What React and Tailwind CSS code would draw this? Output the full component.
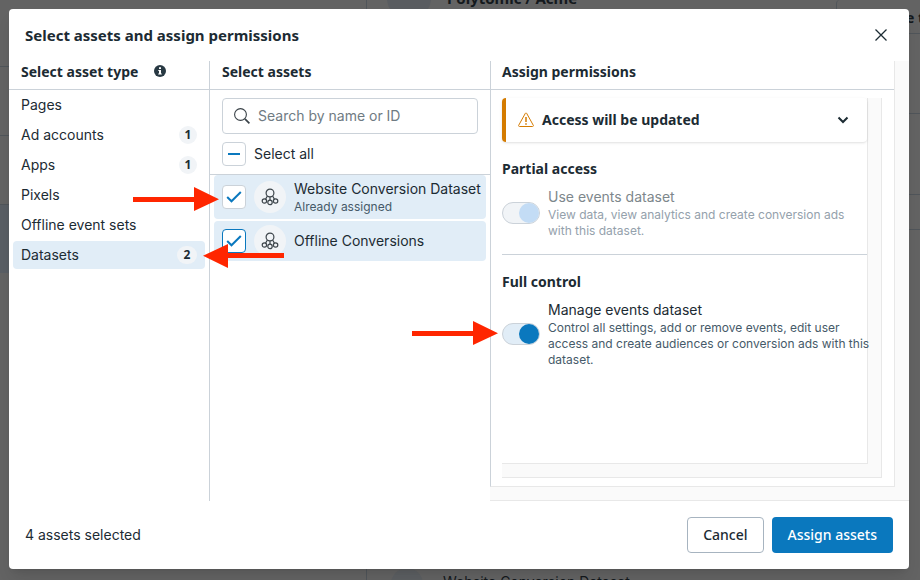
import React from "react";

const assetTypes = [
  { name: "Pages" },
  { name: "Ad accounts", count: 1 },
  { name: "Apps", count: 1 },
  { name: "Pixels" },
  { name: "Offline event sets" },
  { name: "Datasets", count: 2 },
];

const headingClass =
  "font-['Noto_Sans',sans-serif] text-sm leading-[22px] font-bold text-[#1c2b33]";

const columnHeaderClass = "flex h-[29px] shrink-0 border-b border-[#cbd2d9]";

const DatasetIcon = () => (
  <svg
    viewBox="0 0 18 18"
    className="size-[18px]"
    fill="none"
    stroke="#3d454b"
    strokeWidth="1.2"
    aria-hidden="true"
  >
    <circle cx="9" cy="5" r="3.9" />
    <circle cx="3.4" cy="13" r="2.2" />
    <circle cx="9" cy="14.4" r="2.2" />
    <circle cx="14.6" cy="13" r="2.2" />
    <path d="M6.4 8 4.6 11.1M9 8.9v3.3M11.6 8l1.8 3.1" />
  </svg>
);

const Checkbox = ({ id, checked, onChange, mixed = false, focused = false }) => (
  <span className="grid size-6 shrink-0">
    <input
      id={id}
      type="checkbox"
      checked={checked}
      onChange={onChange}
      className={`col-start-1 row-start-1 size-6 appearance-none rounded border bg-white ${
        focused ? "border-[#0a78be]" : "border-[#cbd2d9]"
      }`}
    />
    <svg
      viewBox="0 0 24 24"
      className="pointer-events-none col-start-1 row-start-1 size-6"
      fill="none"
      stroke="#0a78be"
      strokeWidth="2"
      aria-hidden="true"
    >
      {mixed ? (
        <path d="M6 12h12" />
      ) : (
        checked && <path d="m5.2 12 4.3 4.3 9.3-9.3" />
      )}
    </svg>
  </span>
);

const AssetRow = ({ id, name, note, checked, onChange, focused }) => (
  <li
    className={`flex items-center rounded bg-[#e1edf7] px-2 ${
      note ? "h-11" : "h-10"
    }`}
  >
    <Checkbox id={id} checked={checked} onChange={onChange} focused={focused} />
    <span className="ml-2 flex size-8 shrink-0 items-center justify-center rounded-full bg-[#f1f4f7]">
      <DatasetIcon />
    </span>
    <label htmlFor={id} className="ml-2 whitespace-nowrap">
      <span className="block text-sm leading-5">{name}</span>
      {note && (
        <span className="block text-xs leading-4 text-[#465a69]">{note}</span>
      )}
    </label>
  </li>
);

const PermissionToggle = ({ id, label, hint, checked, onChange, disabled }) => (
  <div className="flex items-center gap-2">
    <span className="grid h-[22px] w-[38px] shrink-0">
      <input
        id={id}
        type="checkbox"
        role="switch"
        checked={checked}
        onChange={onChange}
        disabled={disabled}
        className={`col-start-1 row-start-1 h-[22px] w-[38px] appearance-none rounded-full border border-[#cbd2d9] ${
          disabled ? "bg-[#f1f4f7]" : "bg-[#e1edf7]"
        }`}
      />
      <span
        className={`pointer-events-none col-start-1 row-start-1 m-px size-5 rounded-full ${
          checked ? "justify-self-end" : "justify-self-start"
        } ${disabled ? "bg-[#c3dcf5]" : "bg-[#0a78be]"}`}
      />
    </span>
    <label htmlFor={id} className="-mr-1 flex-1">
      <span
        className={`block text-sm leading-5 ${
          disabled ? "text-[#7d878c]" : "text-[#1c2b33]"
        }`}
      >
        {label}
      </span>
      <span
        className={`block text-xs leading-4 whitespace-pre-line ${
          disabled ? "text-[#94a1ac]" : "text-[#465a69]"
        }`}
      >
        {hint}
      </span>
    </label>
  </div>
);

const Arrow = ({ className, short = false }) => (
  <svg
    viewBox={short ? "5 0 81 24" : "0 0 86 24"}
    className={`pointer-events-none absolute h-6 ${
      short ? "w-[81px]" : "w-[86px]"
    } ${className}`}
    fill="#ff2600"
    aria-hidden="true"
  >
    <path d="M0 10h61V0l25 12.2L61 24v-9H0z" />
  </svg>
);

const Backdrop = () => (
  <div
    className="absolute inset-0 flex overflow-hidden bg-[#636363] font-['Noto_Sans',sans-serif] text-sm font-bold text-[#14191d]"
    aria-hidden="true"
  >
    <div className="flex w-[367px] shrink-0 flex-col border-r border-[#50555a]">
      <div className="h-[67px] border-b border-[#50555a]" />
      <div className="h-[69px] border-b border-[#50555a]" />
      <div className="h-[69px] border-b border-[#50555a]" />
      <div className="h-[68px] bg-[#595e64]" />
    </div>
    <div className="flex min-w-0 flex-1 flex-col justify-between">
      <div>
        <div className="flex h-[34px] items-start border-b border-[#50555a] pl-5">
          <div className="-mt-6 size-11 rounded-full bg-[#595c60]" />
          <div className="-mt-3 ml-4 flex-1 text-[15px] leading-5">
            Polytomic / Acme
          </div>
          <div className="h-[34px] w-[84px] rounded-l border-l border-[#50555a] pt-2 pl-[69px] leading-5 whitespace-nowrap">
            e t
          </div>
        </div>
        <div className="h-20 border-b border-[#50555a]" />
        <div className="h-[81px] border-b border-[#50555a]" />
        <div className="h-[35px] border-b border-[#50555a]" />
      </div>
      <div className="flex h-2 items-start pl-6">
        <div className="-mt-1 size-8 shrink-0 rounded-full bg-[#5c5f62]" />
        <div className="ml-5 font-[Inter,sans-serif] font-normal whitespace-nowrap">
          Website Conversion Dataset
        </div>
      </div>
    </div>
  </div>
);

const App = () => {
  const [activeType, setActiveType] = React.useState("Datasets");
  const [website, setWebsite] = React.useState(true);
  const [offline, setOffline] = React.useState(true);
  const [manage, setManage] = React.useState(true);
  const [query, setQuery] = React.useState("");

  const toggleAll = () => {
    const next = !(website && offline);
    setWebsite(next);
    setOffline(next);
  };

  return (
    <div className="relative flex min-h-screen p-[9px] pr-[11px] pb-[11px] font-[Inter,sans-serif] text-[#1c2b33]">
      <Backdrop />

      <div
        role="dialog"
        aria-labelledby="dialog-title"
        className="relative flex min-w-0 flex-1 flex-col rounded bg-white shadow-lg"
      >
        <header className="flex h-[52px] shrink-0 items-center justify-between pr-5 pl-4">
          <h1
            id="dialog-title"
            className="font-['Noto_Sans',sans-serif] text-[15px] leading-5 font-bold"
          >
            Select assets and assign permissions
          </h1>
          <button type="button" aria-label="Close">
            <svg
              viewBox="0 0 16 16"
              className="size-4"
              stroke="#1c2b33"
              strokeWidth="1.3"
              aria-hidden="true"
            >
              <path d="m2.5 2.5 11 11M13.5 2.5l-11 11" />
            </svg>
          </button>
        </header>

        <main className="flex min-h-0 flex-1">
          <section className="flex w-[201px] shrink-0 flex-col border-r border-[#cbd2d9]">
            <div className={`${columnHeaderClass} gap-4 pl-3`}>
              <h2 className={headingClass}>Select asset type</h2>
              <svg
                viewBox="0 0 12 12"
                className="mt-1 size-3"
                aria-hidden="true"
              >
                <circle cx="6" cy="6" r="6" fill="#283943" />
                <path
                  d="M5 2.3h2v1.6H5zM4.3 5H7v3.4h.8v1.1H4.2V8.4H5V6h-.7z"
                  fill="#fff"
                />
              </svg>
            </div>
            <nav className="flex flex-col gap-0.5 p-1 pt-px">
              {assetTypes.map(({ name, count }) => (
                <button
                  key={name}
                  type="button"
                  onClick={() => setActiveType(name)}
                  className={`flex h-7 items-center justify-between rounded px-2 text-left text-sm ${
                    activeType === name ? "bg-[#e1edf7]" : ""
                  }`}
                >
                  {name}
                  {count && (
                    <span
                      className={`flex h-[18px] items-center justify-center rounded-full bg-[#f1f4f7] font-['Noto_Sans',sans-serif] text-xs font-bold ${
                        activeType === name ? "w-5" : "w-[18px]"
                      }`}
                    >
                      {count}
                    </span>
                  )}
                </button>
              ))}
            </nav>
          </section>

          <section className="flex w-[280px] shrink-0 flex-col">
            <div className={`${columnHeaderClass} pl-3`}>
              <h2 className={headingClass}>Select assets</h2>
            </div>
            <div className="border-b border-[#cbd2d9] px-3 py-2">
              <label className="flex h-9 items-center gap-2 rounded border border-[#cbd2d9] px-[11px]">
                <svg
                  viewBox="0 0 16 16"
                  className="size-4 shrink-0"
                  fill="none"
                  stroke="#3a4248"
                  aria-hidden="true"
                >
                  <circle cx="6.5" cy="6.5" r="5.9" strokeWidth="1.1" />
                  <path d="m10.9 10.9 4.5 4.5" strokeWidth="1.7" />
                </svg>
                <input
                  type="text"
                  aria-label="Search assets"
                  placeholder="Search by name or ID"
                  value={query}
                  onChange={(e) => setQuery(e.target.value)}
                  className="min-w-0 flex-1 text-sm outline-none placeholder:text-[#6f7b83]"
                />
              </label>
              <div className="mt-2 flex items-center gap-2">
                <Checkbox
                  id="select-all"
                  checked={false}
                  onChange={toggleAll}
                  mixed={website || offline}
                />
                <label htmlFor="select-all" className="text-sm">
                  Select all
                </label>
              </div>
            </div>
            <ul className="flex flex-col gap-0.5 px-1">
              <AssetRow
                id="website"
                name="Website Conversion Dataset"
                note="Already assigned"
                checked={website}
                onChange={() => setWebsite(!website)}
              />
              <AssetRow
                id="offline"
                name="Offline Conversions"
                checked={offline}
                onChange={() => setOffline(!offline)}
                focused
              />
            </ul>
          </section>

          <section className="flex min-w-0 flex-1 flex-col border-b border-[#e8e8e8] bg-[#fafafa] pr-[14px] pb-[13px]">
            <div className="flex flex-1 flex-col border-r border-b border-l border-[#e8e8e8] border-l-[#cbd2d9] bg-white">
              <div className={`${columnHeaderClass} pl-[11px]`}>
                <h2 className={headingClass}>Assign permissions</h2>
              </div>
              <div className="flex flex-1 flex-col pt-2 pr-3 pb-2 pl-[11px]">
                <div className="flex flex-1 flex-col border-r border-b border-[#e8e8e8] bg-[#fafafa] pr-[13px] pb-[13px]">
                  <div className="flex flex-1 flex-col border-r border-b border-[#e8e8e8] bg-white">
                    <button
                      type="button"
                      aria-expanded="false"
                      className="flex h-11 items-center rounded border-l-4 border-[#d47b00] pr-4 pl-3 shadow-sm"
                    >
                      <svg
                        viewBox="0 0 16 16"
                        className="size-4"
                        fill="none"
                        stroke="#d47b00"
                        strokeLinejoin="round"
                        aria-hidden="true"
                      >
                        <path d="M7.3 1.4.7 13.3c-.3.6 0 1.2.7 1.2h13.2c.7 0 1-.6.7-1.2L8.7 1.4c-.3-.6-1.1-.6-1.4 0z" />
                        <path d="M8 5v5M8 11.2v1.6" strokeWidth="1.5" />
                      </svg>
                      <span className={`${headingClass} ml-2`}>
                        Access will be updated
                      </span>
                      <svg
                        viewBox="0 0 16 16"
                        className="ml-auto size-4"
                        fill="none"
                        stroke="#1c2b33"
                        strokeWidth="2"
                        aria-hidden="true"
                      >
                        <path d="m3.5 5.5 4.5 4.5 4.5-4.5" />
                      </svg>
                    </button>

                    <div className="border-b border-[#cbd2d9] pt-4 pb-[15px]">
                      <h3 className={`${headingClass} mb-[7px]`}>
                        Partial access
                      </h3>
                      <PermissionToggle
                        id="use-dataset"
                        label="Use events dataset"
                        hint={
                          "View data, view analytics and create conversion ads\nwith this dataset."
                        }
                        checked
                        onChange={() => {}}
                        disabled
                      />
                    </div>

                    <div className="pt-4">
                      <h3 className={`${headingClass} mb-[7px]`}>
                        Full control
                      </h3>
                      <PermissionToggle
                        id="manage-dataset"
                        label="Manage events dataset"
                        hint={
                          "Control all settings, add or remove events, edit user\naccess and create audiences or conversion ads with this\ndataset."
                        }
                        checked={manage}
                        onChange={() => setManage(!manage)}
                      />
                    </div>
                  </div>
                </div>
              </div>
            </div>
          </section>
        </main>

        <footer className="flex h-[68px] shrink-0 items-center justify-between pr-4 pl-4">
          <p className="text-sm">4 assets selected</p>
          <div className="flex gap-2 font-['Noto_Sans',sans-serif] text-sm font-medium">
            <button
              type="button"
              className="h-9 rounded border border-[#a7b4c0] px-[15px]"
            >
              Cancel
            </button>
            <button
              type="button"
              className="h-9 rounded bg-[#0a78be] px-4 text-white"
            >
              Assign assets
            </button>
          </div>
        </footer>
      </div>

      <Arrow className="top-[187px] left-[133px]" />
      <Arrow className="top-[244px] left-[203px] rotate-180" short />
      <Arrow className="top-[321px] left-[412px]" />
    </div>
  );
};

export default App;
